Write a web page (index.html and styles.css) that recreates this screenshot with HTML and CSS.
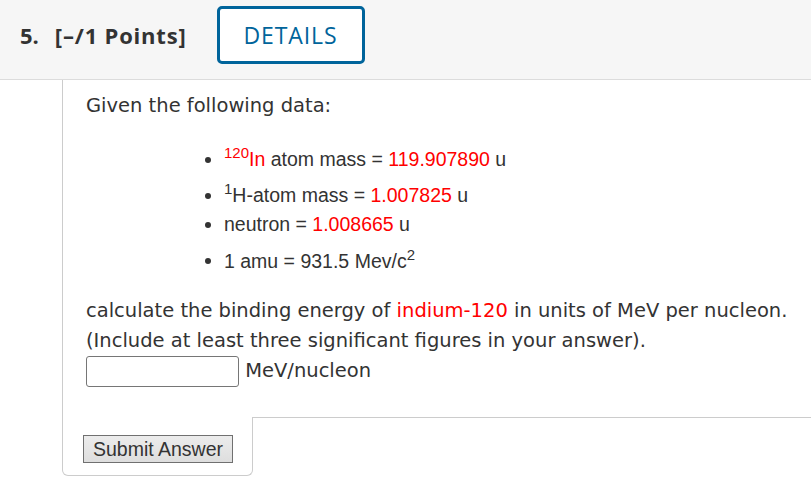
FILE: index.html
```html
<!DOCTYPE html>
<html>
<head>
<meta charset="utf-8">
<link rel="stylesheet" href="styles.css">
</head>
<body>
<div class="header">
  <span class="qnum">5.</span>
  <span class="points">[–/1 Points]</span>
  <button class="details">DETAILS</button>
</div>
<div class="question">
  <div class="body">
    <p class="intro">Given the following data:</p>
    <ul class="data">
      <li><sup class="red">120</sup><span class="red">In</span> atom mass = <span class="red">119.907890</span> u</li>
      <li><sup>1</sup>H-atom mass = <span class="red">1.007825</span> u</li>
      <li>neutron = <span class="red">1.008665</span> u</li>
      <li>1 amu = 931.5 Mev/c<sup>2</sup></li>
    </ul>
    <p class="task">calculate the binding energy of <span class="red">indium-120</span> in units of MeV per nucleon.<br>(Include at least three significant figures in your answer).<br><input class="answer" type="text"> MeV/nucleon</p>
  </div>
  <div class="footer">
    <div class="submitbox"><button class="submit">Submit Answer</button></div>
    <div class="rest"></div>
  </div>
</div>
</body>
</html>
```
FILE: styles.css
```css
html, body { margin: 0; padding: 0; background: #fff; }
body { font-family: "DejaVu Sans", Verdana, sans-serif; color: #333; }
.header {
  height: 80px;
  box-sizing: border-box;
  padding: 0 0 9px 20px;
  background: #f6f6f6;
  border-bottom: 1px solid #dcdcdc;
  display: flex;
  align-items: center;
  font-family: "Open Sans", sans-serif;
}
.qnum { font-weight: 700; font-size: 22px; color: #333; }
.points { font-weight: 700; font-size: 22px; color: #333; margin-left: 16px; letter-spacing: 0.8px; }
.details {
  margin-left: 30px;
  width: 148px;
  height: 58px;
  border: 3px solid #00649b;
  border-radius: 5px;
  background: #fff;
  color: #00649b;
  font-family: "Open Sans", sans-serif;
  font-size: 23px;
  letter-spacing: 0.9px;
  padding: 0;
}
.question { margin-left: 62px; }
.body {
  border-left: 1px solid #ccc;
  padding: 11px 0 0 23px;
  height: 337px;
  box-sizing: border-box;
}
.intro { margin: 0; font-size: 19.5px; line-height: 30px; }
.red { color: #f00; }
.data {
  margin: 17px 0 0 0;
  padding-left: 138px;
  font-family: "Liberation Sans", Arial, sans-serif;
  font-size: 19.5px;
  line-height: 29.5px;
}
.data sup { font-size: 15px; }
.task { margin: 20px 0 0 0; font-size: 19.5px; line-height: 30px; }
.answer {
  width: 153px;
  height: 31px;
  box-sizing: border-box;
  border: 1px solid #767676;
  border-radius: 3px;
  vertical-align: middle;
  margin: 0;
}
.footer { display: flex; }
.submitbox {
  width: 191px;
  height: 59px;
  box-sizing: border-box;
  border: 1px solid #ccc;
  border-top: none;
  border-radius: 0 0 6px 6px;
  padding: 18px 0 0 20px;
}
.rest { flex: 1; border-top: 1px solid #ccc; }
.submit {
  display: block;
  width: 150px;
  height: 28px;
  padding: 0;
  font-family: "Liberation Sans", Arial, sans-serif;
  font-size: 19.5px;
  color: #333;
  border: 1px solid #707070;
  background: linear-gradient(#ececec, #dedede);
}
```
